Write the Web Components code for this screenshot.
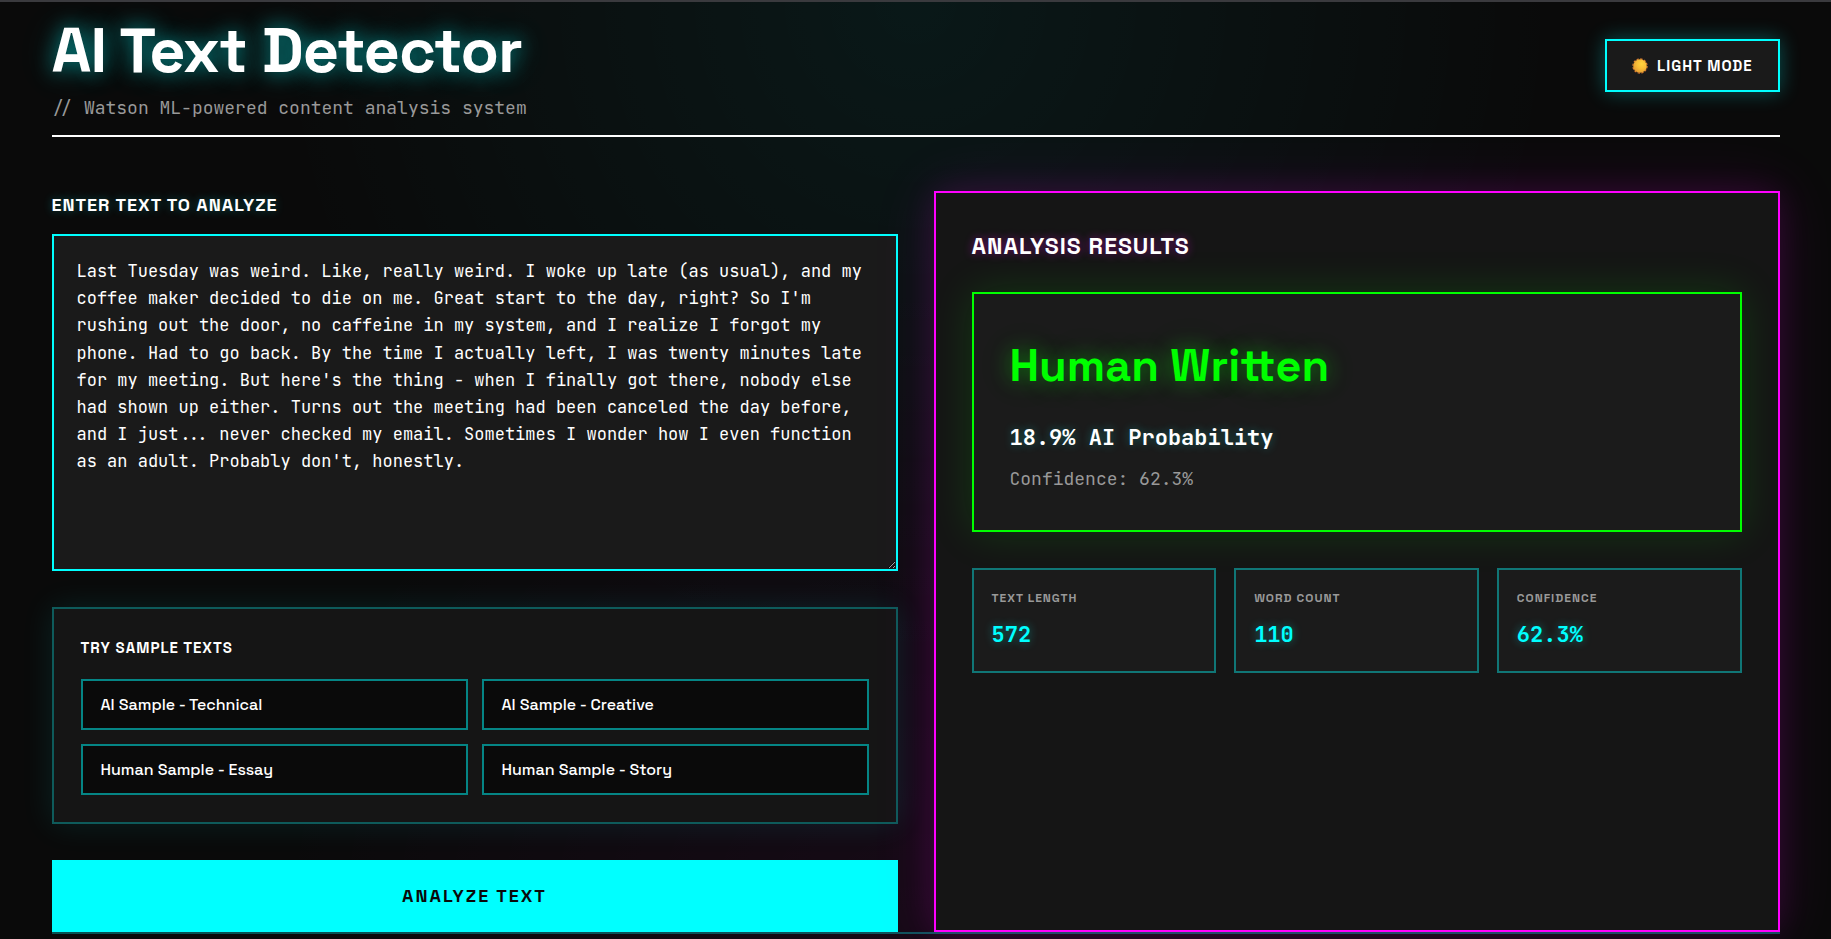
<!DOCTYPE html>
<html lang="en">
<head>
<meta charset="utf-8">
<meta name="viewport" content="width=device-width, initial-scale=1">
<title>AI Text Detector</title>
<style>
  html {
    --sans: "Space Grotesk", Inter, "Liberation Sans", sans-serif;
    --mono: "JetBrains Mono", "DejaVu Sans Mono", "Liberation Mono", monospace;
    --bg: #0a0a0a;
    --panel: #151515;
    --field: #1a1a1a;
    --cyan: #00ffff;
    --magenta: #ff00ff;
    --green: #00ff00;
    --muted: #999999;
    background: var(--bg);
  }
  body {
    margin: 0;
    min-height: 100vh;
    overflow-x: hidden;
    color: #fff;
    font-family: var(--sans);
    font-size: 18px;
  }
</style>
</head>
<body>
<detector-app></detector-app>

<template id="t-app">
  <style>
    :host {
      display: block;
      box-sizing: border-box;
      min-height: 100vh;
      overflow: hidden;
      border-top: 2px solid #3a3a3e;
      background:
        radial-gradient(ellipse at 50% 0%, rgba(0, 255, 255, .06), transparent 50%),
        radial-gradient(ellipse at 50% 100%, rgba(255, 0, 255, .05), transparent 50%),
        var(--bg);
    }
    .page { max-width: 1728px; margin: 0 auto; }
    main {
      display: grid;
      grid-template-columns: 1fr 1fr;
      gap: 36px;
      padding-top: 54px;
    }
    .entry { display: flex; flex-direction: column; gap: 36px; }
    footer { border-top: 2px solid rgba(0, 255, 255, .3); }
  </style>
  <div class="page">
    <app-header>
      AI Text Detector
      <span slot="tagline">// Watson ML-powered content analysis system</span>
    </app-header>
    <main>
      <div class="entry">
        <text-entry label="Enter text to analyze"></text-entry>
        <sample-panel heading="Try sample texts">
          <sample-button>AI Sample - Technical</sample-button>
          <sample-button>AI Sample - Creative</sample-button>
          <sample-button>Human Sample - Essay</sample-button>
          <sample-button>Human Sample - Story</sample-button>
        </sample-panel>
        <analyze-button>Analyze text</analyze-button>
      </div>
      <results-panel heading="Analysis results">
        <verdict-card>
          Human Written
          <span slot="probability">18.9% AI Probability</span>
          <span slot="confidence">Confidence: 62.3%</span>
        </verdict-card>
        <stat-card slot="stats" label="Text length">572</stat-card>
        <stat-card slot="stats" label="Word count">110</stat-card>
        <stat-card slot="stats" label="Confidence">62.3%</stat-card>
      </results-panel>
    </main>
    <footer></footer>
  </div>
</template>

<template id="t-header">
  <style>
    :host { display: block; }
    header {
      display: flex;
      align-items: center;
      justify-content: space-between;
      padding: 7px 0 13px;
      border-bottom: 2px solid #fff;
    }
    h1 {
      margin: 0;
      font-size: 63px;
      font-weight: 700;
      line-height: 82px;
      letter-spacing: -1px;
      text-shadow: 0 0 20px rgba(0, 255, 255, .5), 0 0 40px rgba(0, 255, 255, .2);
    }
    p {
      margin: 2px 0 0;
      font-family: var(--mono);
      font-size: 18px;
      line-height: 29px;
      color: var(--muted);
    }
  </style>
  <header>
    <div>
      <h1><slot></slot></h1>
      <p><slot name="tagline"></slot></p>
    </div>
    <theme-toggle>Light mode</theme-toggle>
  </header>
</template>

<template id="t-toggle">
  <style>
    :host { display: block; }
    button {
      display: flex;
      align-items: center;
      gap: 9px;
      height: 53px;
      padding: 0 25px;
      border: 2px solid var(--cyan);
      background: var(--field);
      color: #fff;
      font: 700 15px var(--sans);
      letter-spacing: 1px;
      text-transform: uppercase;
      box-shadow: 0 0 20px rgba(0, 255, 255, .3);
      cursor: pointer;
    }
  </style>
  <button type="button">
    <svg width="16" height="16" viewBox="0 0 16 16" aria-hidden="true">
      <defs>
        <radialGradient id="g" cx=".62" cy=".35" r=".7">
          <stop offset="0" stop-color="#ffd43e"/>
          <stop offset=".5" stop-color="#f9bd36"/>
          <stop offset="1" stop-color="#e39a30"/>
        </radialGradient>
      </defs>
      <circle cx="8" cy="8" r="7.1" fill="none" stroke="#e07a30" stroke-width="1.2" stroke-dasharray="2.3 1.42"/>
      <circle cx="8" cy="8" r="6.8" fill="url(#g)"/>
    </svg>
    <slot></slot>
  </button>
</template>

<template id="t-entry">
  <style>
    :host { display: block; }
    label {
      display: block;
      margin-bottom: 16px;
      font-size: 18px;
      font-weight: 700;
      line-height: 27px;
      letter-spacing: 1px;
      text-transform: uppercase;
      text-shadow: 0 0 10px rgba(0, 255, 255, .3);
    }
    textarea {
      display: block;
      box-sizing: border-box;
      width: 100%;
      height: 337px;
      padding: 22px 23px;
      border: 2px solid var(--cyan);
      border-radius: 0;
      outline: none;
      background: var(--field);
      color: #fff;
      font: 17px/1.6 var(--mono);
      resize: vertical;
    }
  </style>
  <label for="text"></label>
  <textarea id="text" spellcheck="false">Last Tuesday was weird. Like, really weird. I woke up late (as usual), and my coffee maker decided to die on me. Great start to the day, right? So I'm rushing out the door, no caffeine in my system, and I realize I forgot my phone. Had to go back. By the time I actually left, I was twenty minutes late for my meeting. But here's the thing - when I finally got there, nobody else had shown up either. Turns out the meeting had been canceled the day before, and I just... never checked my email. Sometimes I wonder how I even function as an adult. Probably don't, honestly.</textarea>
</template>

<template id="t-samples">
  <style>
    :host { display: block; }
    section {
      padding: 27px;
      border: 2px solid rgba(0, 255, 255, .3);
      background: var(--panel);
      box-shadow: 0 0 30px rgba(0, 255, 255, .1);
    }
    h3 {
      margin: 0 0 20px;
      font-size: 15px;
      font-weight: 700;
      line-height: 23px;
      letter-spacing: 1px;
      text-transform: uppercase;
    }
    .grid { display: grid; grid-template-columns: 1fr 1fr; gap: 14px; }
  </style>
  <section>
    <h3></h3>
    <div class="grid"><slot></slot></div>
  </section>
</template>

<template id="t-sample">
  <style>
    :host { display: block; }
    button {
      display: block;
      width: 100%;
      height: 51px;
      padding: 0 18px;
      border: 2px solid rgba(0, 255, 255, .5);
      background: var(--bg);
      color: #fff;
      font: 500 16px var(--sans);
      text-align: left;
      cursor: pointer;
    }
  </style>
  <button type="button"><slot></slot></button>
</template>

<template id="t-analyze">
  <style>
    :host { display: block; }
    button {
      display: block;
      width: 100%;
      height: 72px;
      padding: 0 0 2px;
      border: 0;
      background: var(--cyan);
      color: var(--bg);
      font: 600 18px var(--sans);
      letter-spacing: 2px;
      text-transform: uppercase;
      cursor: pointer;
    }
  </style>
  <button type="button"><slot></slot></button>
</template>

<template id="t-results">
  <style>
    :host { display: block; }
    section {
      box-sizing: border-box;
      height: 100%;
      padding: 36px;
      border: 2px solid var(--magenta);
      background: var(--panel);
      box-shadow: 0 0 30px rgba(255, 0, 255, .1), 0 0 60px rgba(255, 0, 255, .12);
    }
    h2 {
      margin: 0 0 29px;
      font-size: 23px;
      font-weight: 700;
      line-height: 34px;
      letter-spacing: 1px;
      text-transform: uppercase;
      text-shadow: 0 0 10px rgba(255, 0, 255, .4);
    }
    .stats {
      display: grid;
      grid-template-columns: repeat(3, 1fr);
      gap: 18px;
      margin-top: 36px;
    }
  </style>
  <section>
    <h2></h2>
    <slot></slot>
    <div class="stats"><slot name="stats"></slot></div>
  </section>
</template>

<template id="t-verdict">
  <style>
    :host {
      display: block;
      padding: 36px 36px 38px;
      border: 2px solid var(--green);
      background: #1b1b1b;
      box-shadow: 0 0 40px rgba(0, 255, 0, .15);
    }
    p { margin: 0; font-family: var(--mono); }
    .verdict {
      font: 700 45px/72px var(--sans);
      color: var(--green);
      text-shadow: 0 0 20px rgba(0, 255, 0, .4), 0 0 40px rgba(0, 255, 0, .15);
    }
    .probability {
      margin-top: 18px;
      font-size: 22px;
      font-weight: 700;
      line-height: 36px;
      text-shadow: 0 0 10px rgba(0, 255, 255, .3);
    }
    .confidence {
      margin-top: 9px;
      font-size: 18px;
      line-height: 27px;
      color: var(--muted);
    }
  </style>
  <p class="verdict"><slot></slot></p>
  <p class="probability"><slot name="probability"></slot></p>
  <p class="confidence"><slot name="confidence"></slot></p>
</template>

<template id="t-stat">
  <style>
    :host {
      display: block;
      padding: 18px;
      border: 2px solid rgba(0, 255, 255, .4);
      background: #1b1b1b;
    }
    dl, dd { margin: 0; }
    dt {
      font-size: 12px;
      font-weight: 700;
      line-height: 20px;
      letter-spacing: 1px;
      text-transform: uppercase;
      color: var(--muted);
    }
    dd {
      margin-top: 9px;
      font: 700 22px/36px var(--mono);
      color: var(--cyan);
      text-shadow: 0 0 10px rgba(0, 255, 255, .4);
    }
  </style>
  <dl>
    <dt></dt>
    <dd><slot></slot></dd>
  </dl>
</template>

<script>
  class Part extends HTMLElement {
    constructor() {
      super();
      const template = document.getElementById(this.constructor.template);
      this.attachShadow({ mode: "open" }).append(template.content.cloneNode(true));
    }
    fill(selector, attribute) {
      this.shadowRoot.querySelector(selector).textContent = this.getAttribute(attribute) || "";
    }
  }

  class AppHeader extends Part { static template = "t-header"; }
  class ThemeToggle extends Part { static template = "t-toggle"; }
  class TextEntry extends Part {
    static template = "t-entry";
    connectedCallback() { this.fill("label", "label"); }
  }
  class SamplePanel extends Part {
    static template = "t-samples";
    connectedCallback() { this.fill("h3", "heading"); }
  }
  class SampleButton extends Part { static template = "t-sample"; }
  class AnalyzeButton extends Part { static template = "t-analyze"; }
  class ResultsPanel extends Part {
    static template = "t-results";
    connectedCallback() { this.fill("h2", "heading"); }
  }
  class VerdictCard extends Part { static template = "t-verdict"; }
  class StatCard extends Part {
    static template = "t-stat";
    connectedCallback() { this.fill("dt", "label"); }
  }
  class DetectorApp extends Part { static template = "t-app"; }

  customElements.define("app-header", AppHeader);
  customElements.define("theme-toggle", ThemeToggle);
  customElements.define("text-entry", TextEntry);
  customElements.define("sample-panel", SamplePanel);
  customElements.define("sample-button", SampleButton);
  customElements.define("analyze-button", AnalyzeButton);
  customElements.define("results-panel", ResultsPanel);
  customElements.define("verdict-card", VerdictCard);
  customElements.define("stat-card", StatCard);
  customElements.define("detector-app", DetectorApp);
</script>
</body>
</html>
